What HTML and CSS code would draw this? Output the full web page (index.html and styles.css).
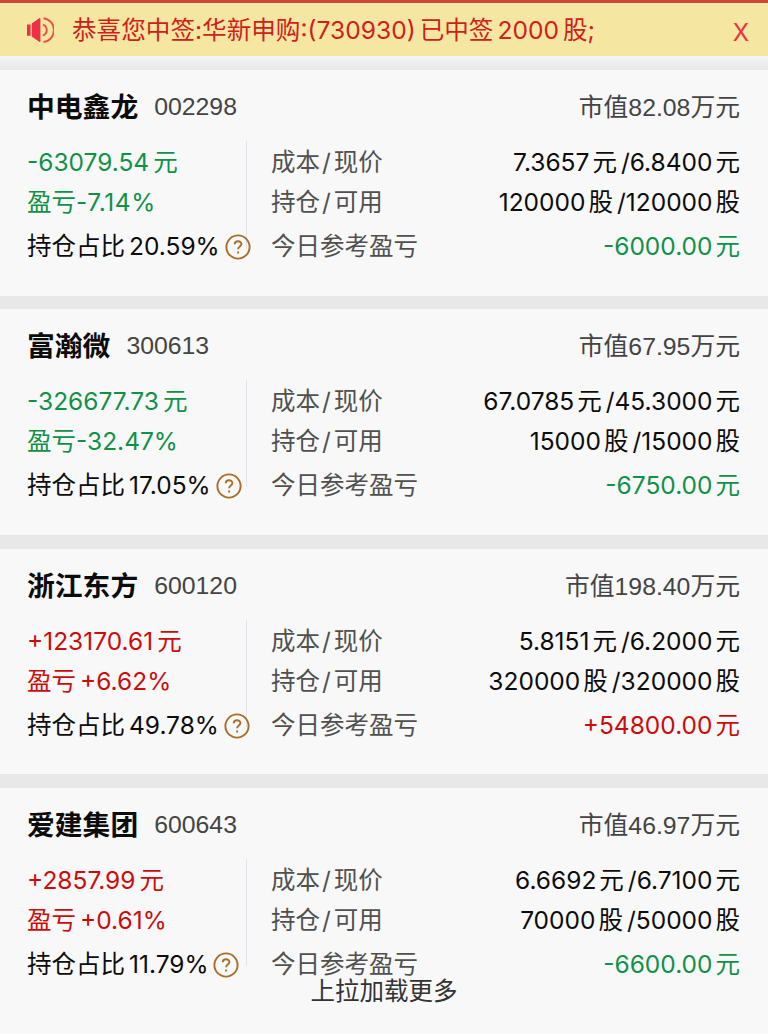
FILE: index.html
```html
<!DOCTYPE html>
<html lang="zh-CN">
<head>
  <meta charset="UTF-8" />
  <meta name="viewport" content="width=device-width, initial-scale=1.0" />
  <title>持仓</title>
  <link rel="stylesheet" href="styles.css">
</head>
<body>
  <!-- Notice bar -->
  <div class="notice">
    <svg class="speaker" viewBox="0 0 28 28" width="28" height="28">
      <path d="M1.6 8.6h3v11.2h-3a.6.6 0 0 1-.6-.6V9.2a.6.6 0 0 1 .6-.6zM5.8 7.6 13.2 2.2q1.2-.8 1.2.6v22.4q0 1.4-1.2.6L5.8 20.6z" fill="#ee2f46" />
      <path d="M17 8.6a5.9 5.9 0 0 1 0 11M17.5 2.2a12 12 0 0 1 0 23.8" fill="none" stroke="#e8504c" stroke-width="1.9" />
    </svg>
    <p class="notice-text">恭喜您中签:华新申购:(730930)<span class="num">已中签</span><span class="num">2000</span><span class="unit">股;</span></p>
    <button class="close">X</button>
  </div>

  <!-- Holdings -->
  <div class="list">
    <div class="card">
      <div class="card-head">
        <h2>中电鑫龙</h2>
        <span class="code">002298</span>
        <span class="value">市值82.08万元</span>
      </div>
      <div class="card-body">
        <div class="profit">
          <p class="down">-63079.54<span class="unit">元</span></p>
          <p class="down">盈亏-<span class="tail">7.14%</span></p>
          <p>持仓占比<span class="num">20.59%</span>
            <svg class="help" viewBox="0 0 26 26"><circle cx="13" cy="13" r="11.6" /><path d="M9.7 10.3c.1-4 6.7-4 6.7-.2 0 2.5-3.3 2.5-3.3 5.2M13.1 17.4v2.1" /></svg>
          </p>
        </div>
        <div class="detail">
          <p><span class="label">成本<i>/</i>现价</span><span>7.3657<span class="unit">元</span><span class="num">/6.8400</span><span class="unit">元</span></span></p>
          <p><span class="label">持仓<i>/</i>可用</span><span>120000<span class="unit">股</span><span class="num">/120000</span><span class="unit">股</span></span></p>
          <p><span class="label">今日参考盈亏</span><span class="down">-6000.00<span class="unit">元</span></span></p>
        </div>
      </div>
    </div>

    <div class="card">
      <div class="card-head">
        <h2>富瀚微</h2>
        <span class="code">300613</span>
        <span class="value">市值67.95万元</span>
      </div>
      <div class="card-body">
        <div class="profit">
          <p class="down">-326677.73<span class="unit">元</span></p>
          <p class="down">盈亏-32.47%</p>
          <p>持仓占比<span class="num">17.05%</span>
            <svg class="help" viewBox="0 0 26 26"><circle cx="13" cy="13" r="11.6" /><path d="M9.7 10.3c.1-4 6.7-4 6.7-.2 0 2.5-3.3 2.5-3.3 5.2M13.1 17.4v2.1" /></svg>
          </p>
        </div>
        <div class="detail">
          <p><span class="label">成本<i>/</i>现价</span><span>67.0785<span class="unit">元</span><span class="num">/45.3000</span><span class="unit">元</span></span></p>
          <p><span class="label">持仓<i>/</i>可用</span><span>15000<span class="unit">股</span><span class="num">/15000</span><span class="unit">股</span></span></p>
          <p><span class="label">今日参考盈亏</span><span class="down">-6750.00<span class="unit">元</span></span></p>
        </div>
      </div>
    </div>

    <div class="card">
      <div class="card-head">
        <h2>浙江东方</h2>
        <span class="code">600120</span>
        <span class="value">市值198.40万元</span>
      </div>
      <div class="card-body">
        <div class="profit">
          <p class="up">+123170.61<span class="unit">元</span></p>
          <p class="up">盈亏<span class="num">+6.62%</span></p>
          <p>持仓占比<span class="num">49.78%</span>
            <svg class="help" viewBox="0 0 26 26"><circle cx="13" cy="13" r="11.6" /><path d="M9.7 10.3c.1-4 6.7-4 6.7-.2 0 2.5-3.3 2.5-3.3 5.2M13.1 17.4v2.1" /></svg>
          </p>
        </div>
        <div class="detail">
          <p><span class="label">成本<i>/</i>现价</span><span>5.8151<span class="unit">元</span><span class="num">/6.2000</span><span class="unit">元</span></span></p>
          <p><span class="label">持仓<i>/</i>可用</span><span>320000<span class="unit">股</span><span class="num">/320000</span><span class="unit">股</span></span></p>
          <p><span class="label">今日参考盈亏</span><span class="up">+54800.00<span class="unit">元</span></span></p>
        </div>
      </div>
    </div>

    <div class="card">
      <div class="card-head">
        <h2>爱建集团</h2>
        <span class="code">600643</span>
        <span class="value">市值46.97万元</span>
      </div>
      <div class="card-body">
        <div class="profit">
          <p class="up">+2857.99<span class="unit">元</span></p>
          <p class="up">盈亏<span class="num">+0.61%</span></p>
          <p>持仓占比<span class="num">11.79%</span>
            <svg class="help" viewBox="0 0 26 26"><circle cx="13" cy="13" r="11.6" /><path d="M9.7 10.3c.1-4 6.7-4 6.7-.2 0 2.5-3.3 2.5-3.3 5.2M13.1 17.4v2.1" /></svg>
          </p>
        </div>
        <div class="detail">
          <p><span class="label">成本<i>/</i>现价</span><span>6.6692<span class="unit">元</span><span class="num">/6.7100</span><span class="unit">元</span></span></p>
          <p><span class="label">持仓<i>/</i>可用</span><span>70000<span class="unit">股</span><span class="num">/50000</span><span class="unit">股</span></span></p>
          <p><span class="label">今日参考盈亏</span><span class="down">-6600.00<span class="unit">元</span></span></p>
        </div>
      </div>
      <div class="load-more">上拉加载更多</div>
    </div>
  </div>
</body>
</html>
```
FILE: styles.css
```css
* {
  box-sizing: border-box;
}
body {
  font-family: Inter, "Noto Sans CJK SC", sans-serif;
  font-size: 24.5px;
  margin: 0;
  padding: 0;
  color: #0c0c0c;
  background-color: #fdfdfd;
  height: 1034px;
  overflow: hidden;
}
p,
h2 {
  margin: 0;
}
.notice {
  display: flex;
  align-items: center;
  height: 56px;
  padding: 0 18px 0 26px;
  border-top: 3px solid #d0453b;
  background-color: #f5e7a2;
  color: #d0201a;
}
.speaker {
  flex: none;
  margin-right: 18px;
}
.notice-text {
  flex: 1;
  font-size: 24.6px;
  line-height: 40px;
  white-space: nowrap;
}
.close {
  border: none;
  padding: 5px 0 0;
  width: 18px;
  background: none;
  color: #ea3340;
  font-family: Inter, sans-serif;
  font-size: 24px;
}
.list {
  padding-top: 14px;
  background: linear-gradient(#f4f4f4, #e8e8e8 14px);
}
.card {
  position: relative;
  height: 225.5px;
  margin-bottom: 13.8px;
  padding: 14px 28px 0 27px;
  background-color: #f8f8f8;
}
.card:last-child {
  height: 245px;
  margin-bottom: 0;
}
.card-head {
  display: flex;
  align-items: center;
  height: 42px;
  font-family: "Liberation Sans", "Noto Sans CJK SC", sans-serif;
  font-size: 24.8px;
  color: #444;
}
.card-head h2 {
  font-size: 27.8px;
  font-weight: 700;
  color: #0c0c0c;
  margin-right: 16px;
}
.card-head .code {
  padding-top: 4px;
}
.card-head .value {
  margin-left: auto;
}
.card-body {
  display: flex;
  margin-top: 15px;
}
.profit {
  width: 220px;
  height: 107px;
  border-right: 1px solid #e2e2ea;
}
.card-body p {
  height: 40px;
  line-height: 42px;
  white-space: nowrap;
}
.card-body p:last-child {
  height: 47px;
  line-height: 50px;
}
.detail {
  flex: 1;
  padding-left: 24px;
}
.detail p {
  display: flex;
  justify-content: space-between;
}
.label {
  color: #505050;
}
.label i {
  font-style: normal;
  margin: 0 3px 0 2px;
}
.tail {
  letter-spacing: 0.6px;
}
.num {
  margin-left: 4px;
}
.unit {
  margin-left: 4px;
}
.detail .unit {
  margin-left: 3px;
}
.help {
  width: 26px;
  height: 26px;
  margin-left: -2px;
  vertical-align: -5px;
  fill: none;
  stroke: #a86e2a;
  stroke-width: 1.9;
}
.down {
  color: #109148;
}
.up {
  color: #cb0c0c;
}
/* pull-to-load hint sits on top of the last card */
.load-more {
  position: absolute;
  top: 185px;
  left: 0;
  width: 100%;
  line-height: 36px;
  text-align: center;
  color: #333;
}
```
